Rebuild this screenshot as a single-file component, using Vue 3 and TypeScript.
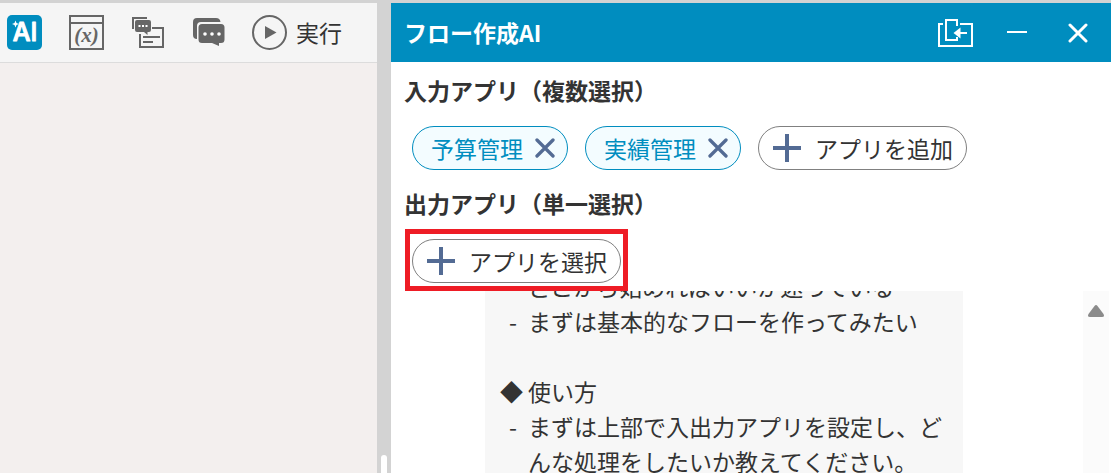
<script setup lang="ts">
import { ref } from 'vue'

interface Line {
  marker: string
  text: string
}

const inputApps = ref<string[]>(['予算管理', '実績管理'])

const lines: Line[] = [
  { marker: '', text: 'どこから始めればいいか迷っている' },
  { marker: '-', text: 'まずは基本的なフローを作ってみたい' },
  { marker: '', text: '' },
  { marker: '◆', text: '使い方' },
  { marker: '-', text: 'まずは上部で入出力アプリを設定し、どんな処理をしたいか教えてください。' },
]

function removeApp(name: string): void {
  inputApps.value = inputApps.value.filter((app) => app !== name)
}
</script>

<template>
  <div class="screen">
    <section class="workspace">
      <div class="toolbar">
        <button class="tool" type="button" aria-label="AI">
          <svg width="35" height="35" viewBox="0 0 35 35">
            <rect width="35" height="35" rx="5" fill="#008dbf" />
            <text class="logo-text" x="18" y="26" text-anchor="middle">AI</text>
            <path d="M8.500 5.500 L9.500 8 L12 9 L9.500 10 L8.500 12.500 L7.500 10 L5 9 L7.500 8Z" fill="#fff" />
          </svg>
        </button>
        <button class="tool" type="button" aria-label="変数">
          <svg width="35" height="35" viewBox="0 0 35 35" fill="none" stroke="#666" stroke-width="2">
            <path d="M1 1H34V34H1ZM1 8H34" />
            <text class="var-text" x="17.500" y="27" text-anchor="middle">(x)</text>
          </svg>
        </button>
        <button class="tool" type="button" aria-label="コメント一覧">
          <svg width="35" height="35" viewBox="0 0 35 35" fill="none" stroke="#666" stroke-width="2">
            <path d="M2 14V3H16" />
            <path d="M9 19V32H32V13H21M12 22H29M12 27H22" />
            <path d="M6 5H18Q20 5 20 7V15Q20 17 18 17H16.500V20L13 17H6Q4 17 4 15V7Q4 5 6 5Z" fill="#666" stroke="none" />
            <path d="M7.500 11H9.500M11 11H13M14.500 11H16.500" stroke="#fff" />
          </svg>
        </button>
        <button class="tool" type="button" aria-label="コメント">
          <svg width="32" height="35" viewBox="0 0 32 35">
            <path d="M4 3H23Q27 3 27.500 7H8Q4 7 4 11V24Q0 24 0 20V7Q0 3 4 3Z" fill="#666" />
            <path d="M9 9H28Q31.500 9 31.500 12.500V24.500Q31.500 28 28 28H26V31L19 28H9Q5.500 28 5.500 24.500V12.500Q5.500 9 9 9Z" fill="#666" />
            <g fill="#fff"><circle cx="12" cy="19" r="1.800" /><circle cx="19" cy="19" r="1.800" /><circle cx="26" cy="19" r="1.800" /></g>
          </svg>
        </button>
        <button class="tool run" type="button">
          <svg width="35" height="35" viewBox="0 0 35 35">
            <circle cx="17.500" cy="17.500" r="16.500" fill="none" stroke="#666" stroke-width="2" />
            <path d="M13 11V24L24.500 17.500Z" fill="#666" />
          </svg>
          <span>実行</span>
        </button>
      </div>
    </section>

    <div class="splitter"><div class="grip"></div></div>

    <section class="panel">
      <header class="panel-head">
        <h1>フロー作成AI</h1>
        <button type="button" aria-label="サイドに表示">
          <svg width="35" height="30" viewBox="0 0 35 30" fill="none" stroke="#fff" stroke-width="2">
            <path d="M5 6H1V28H34V6H22" />
            <path d="M19 8V2H8V22H19V19" />
            <path d="M22 15H29" />
            <path d="M15.500 15L22.500 9.500V20.500Z" fill="#fff" stroke="none" />
          </svg>
        </button>
        <button class="minimize" type="button" aria-label="最小化">
          <svg width="20" height="20" viewBox="0 0 20 20"><path d="M0 9H20" stroke="#fff" stroke-width="2" /></svg>
        </button>
        <button class="close" type="button" aria-label="閉じる">
          <svg width="20" height="20" viewBox="0 0 20 20"><path d="M2 2L18 18M18 2L2 18" stroke="#fff" stroke-width="3" stroke-linecap="round" /></svg>
        </button>
      </header>

      <div class="settings">
        <h2>入力アプリ（複数選択）</h2>
        <div class="chips">
          <span v-for="app in inputApps" :key="app" class="chip">
            {{ app }}
            <button type="button" :aria-label="app + 'を削除'" @click="removeApp(app)">
              <svg width="20" height="20" viewBox="0 0 20 20"><path d="M2 2L18 18M18 2L2 18" stroke="#536b94" stroke-width="3.300" stroke-linecap="round" /></svg>
            </button>
          </span>
          <button class="add" type="button">
            <svg width="28" height="28" viewBox="0 0 28 28"><path d="M14 0V28M0 14H28" stroke="#536b94" stroke-width="4" /></svg>
            アプリを追加
          </button>
        </div>
        <h2>出力アプリ（単一選択）</h2>
        <div class="highlight">
          <button class="add" type="button">
            <svg width="28" height="28" viewBox="0 0 28 28"><path d="M14 0V28M0 14H28" stroke="#536b94" stroke-width="4" /></svg>
            アプリを選択
          </button>
        </div>
      </div>

      <div class="chat">
        <ul class="bubble">
          <li v-for="(line, i) in lines" :key="i">
            <span class="marker" :class="{ dash: line.marker === '-' }">{{ line.marker }}</span>
            <span>{{ line.text }}</span>
          </li>
        </ul>
        <div class="scrollbar">
          <svg width="16" height="12" viewBox="0 0 16 12"><path d="M6.500 1Q8 -1 9.500 1L15.500 9Q17 12 14 12H2Q-1 12 0.500 9Z" fill="#8b8b8b" /></svg>
        </div>
      </div>
    </section>
  </div>
</template>

<style>
body {
  margin: 0;
}
</style>

<style scoped>
.screen {
  display: grid;
  grid-template-columns: 377fr 14px 720fr;
  height: 100vh;
  box-sizing: border-box;
  border-top: 3px solid #d3d3d3;
  overflow: hidden;
  background: #fff;
  color: #333;
  font-family: "Noto Sans CJK JP", sans-serif;
  font-size: 23px;
  line-height: 35px;
}

button {
  display: flex;
  align-items: center;
  padding: 0;
  border: 0;
  background: none;
  color: inherit;
  font: inherit;
  white-space: nowrap;
  cursor: pointer;
}

svg {
  display: block;
  flex: none;
}

.workspace {
  min-width: 0;
  background: #f3efee;
}

.toolbar {
  display: flex;
  align-items: center;
  gap: 27px;
  height: 59px;
  padding-left: 7px;
  border-bottom: 1px solid #dcdcdc;
  background: #f5f5f5;
}

.logo-text {
  font: 500 25px Inter, sans-serif;
  fill: #fff;
  stroke: #fff;
  stroke-width: 1px;
  stroke-linejoin: round;
}

.var-text {
  font: italic 700 21px "Liberation Serif", serif;
  fill: #666;
  stroke: none;
}

.run {
  gap: 9px;
}

.splitter {
  display: flex;
  flex-direction: column;
  justify-content: flex-end;
  align-items: center;
  background: #d3d3d3;
}

.grip {
  width: 6px;
  height: 18px;
  border-radius: 3px 3px 0 0;
  background: #fff;
}

.panel {
  display: flex;
  flex-direction: column;
  min-width: 0;
  min-height: 0;
}

.panel-head {
  display: flex;
  align-items: center;
  height: 59px;
  flex: none;
  padding: 0 23px 0 13px;
  background: #008dbf;
  color: #fff;
}

h1,
h2 {
  margin: 0;
  font-size: 23px;
  line-height: 35px;
  font-weight: 700;
}

h1 {
  flex: 1;
}

.minimize {
  margin: 0 41px 0 34px;
}

.settings {
  padding: 11px 13px 0;
}

.chips {
  display: flex;
  gap: 17px;
  padding: 18px 0 16px 8px;
}

.chip,
.add {
  display: flex;
  align-items: center;
  box-sizing: border-box;
  height: 44px;
  border: 1px solid #808080;
  border-radius: 22px;
  white-space: nowrap;
}

.chip {
  gap: 12px;
  padding: 0 12px 0 18px;
  border-color: #008dbf;
  background: #f3fcff;
  color: #008dbf;
}

.add {
  gap: 14px;
  padding: 0 13px 0 14px;
  background: #fff;
}

.highlight {
  width: max-content;
  margin: 8px 0 0 1px;
  padding: 5px 2px 3px;
  border: 5px solid #ee1c25;
}

.chat {
  display: flex;
  flex: 1;
  justify-content: space-between;
  min-height: 0;
  padding: 0 2px 0 94px;
  overflow: hidden;
}

/* The message list is scrolled partway down its first line. */
.bubble {
  width: 478px;
  box-sizing: border-box;
  margin: -22px 0 0;
  padding: 0 15px;
  list-style: none;
  background: #f7f7f7;
}

.bubble li {
  display: grid;
  grid-template-columns: 28px 1fr;
  min-height: 35px;
}

.marker.dash {
  padding-left: 9px;
}

.scrollbar {
  display: flex;
  justify-content: center;
  width: 26px;
  padding-top: 14px;
  background: #fbfbfb;
}
</style>
